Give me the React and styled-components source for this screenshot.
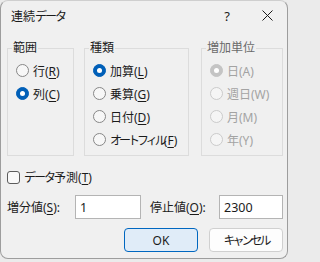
import React from "react";
import styled, { createGlobalStyle } from "styled-components";

const Global = createGlobalStyle`
  html, body {
    margin: 0;
    padding: 0;
    background: #ebebeb;
  }
  body {
    font-family: "Noto Sans", "Noto Sans CJK JP", sans-serif;
    font-size: 12px;
    color: #1b1b1b;
  }
`;

const Dialog = styled.div`
  width: 288px;
  height: 259px;
  box-sizing: border-box;
  background: #f0f0f0;
  border: 1px solid #9d9d9d;
  border-top-color: #cfcfcf;
  border-radius: 8px;
  display: flex;
  flex-direction: column;
  overflow: hidden;
`;

const TitleBar = styled.div`
  height: 29px;
  display: flex;
  align-items: center;
  padding-left: 10px;
`;

const Title = styled.div`
  flex: 1;
  font-size: 12px;
`;

const CapButton = styled.div`
  width: 40px;
  height: 29px;
  display: flex;
  align-items: center;
  justify-content: center;
  font-size: 13px;
  color: #1b1b1b;
`;

const Body = styled.div`
  padding: 10px 4px 0 6px;
  width: 276px;
  display: flex;
  flex-direction: column;
`;

const Groups = styled.div`
  display: flex;
`;

const Group = styled.fieldset`
  width: ${(p) => p.$w}px;
  height: 116px;
  box-sizing: border-box;
  margin: 0 0 0 ${(p) => p.$ml || 0}px;
  padding: 3px 8px 0 8px;
  border: 1px solid #dcdcdc;
  min-width: 0;
`;

const Legend = styled.legend`
  padding: 0 1px;
  margin-left: -4px;
  line-height: 16px;
  color: ${(p) => (p.$disabled ? "#6a6a6a" : "#1b1b1b")};
`;

const Row = styled.label`
  height: 23px;
  display: flex;
  align-items: center;
  gap: 4px;
  white-space: nowrap;
  color: ${(p) => (p.$disabled ? "#a3a3a3" : "#1b1b1b")};
`;

const Radio = styled.span`
  width: 13px;
  height: 13px;
  box-sizing: border-box;
  border-radius: 50%;
  flex: none;
  display: flex;
  align-items: center;
  justify-content: center;
  border: 1px solid
    ${(p) => (p.$checked ? (p.$disabled ? "#c4c4c4" : "#005fb8") : p.$disabled ? "#cbcbcb" : "#878787")};
  background: ${(p) => (p.$checked ? (p.$disabled ? "#c4c4c4" : "#005fb8") : p.$disabled ? "#f5f5f5" : "#f7f7f7")};

  &::after {
    content: "";
    display: ${(p) => (p.$checked ? "block" : "none")};
    width: 5px;
    height: 5px;
    border-radius: 50%;
    background: #fff;
  }
`;

// katakana in the original UI font is proportional, much narrower than full width
const Kana = styled.span`
  display: inline-block;
  letter-spacing: ${(p) => p.$ls}px;
`;

const Key = styled.span`
  text-decoration: underline;
  text-underline-offset: 2px;
`;

const CheckRow = styled.label`
  margin-top: 11px;
  height: 20px;
  display: flex;
  align-items: center;
  gap: 4px;
`;

const Box = styled.span`
  width: 13px;
  height: 13px;
  box-sizing: border-box;
  border: 1px solid #5c5c5c;
  border-radius: 3px;
  background: #f9f9f9;
  flex: none;
`;

const Fields = styled.div`
  margin-top: 8px;
  display: flex;
  align-items: center;
`;

const FieldLabel = styled.span`
  width: ${(p) => p.$w}px;
  margin-left: ${(p) => p.$ml || 0}px;
  white-space: nowrap;
`;

const Input = styled.div`
  width: ${(p) => p.$w}px;
  height: 24px;
  box-sizing: border-box;
  border: 1px solid #b4b4b4;
  background: #fff;
  padding: 0 4px;
  display: flex;
  align-items: center;
  font-size: 12.5px;
`;

const Buttons = styled.div`
  margin-top: 9px;
  display: flex;
  justify-content: flex-end;
  gap: 11px;
`;

const Button = styled.div`
  width: 74px;
  height: 24px;
  box-sizing: border-box;
  border-radius: 4px;
  display: flex;
  align-items: center;
  justify-content: center;
  border: 1px solid ${(p) => (p.$primary ? "#0067c0" : "#d0d0d0")};
  background: ${(p) => (p.$primary ? "#e0ecf8" : "#fdfdfd")};
`;

const Opt = ({ checked, disabled, children }) => (
  <Row $disabled={disabled}>
    <Radio $checked={checked} $disabled={disabled} />
    <span>{children}</span>
  </Row>
);

export default function App() {
  return (
    <>
      <Global />
      <Dialog>
        <TitleBar>
          <Title>
            連続<Kana $ls={-2}>データ</Kana>
          </Title>
          <CapButton>?</CapButton>
          <CapButton>
            <svg width="11" height="11" viewBox="0 0 11 11">
              <path d="M0.5 0.5 L10.5 10.5 M10.5 0.5 L0.5 10.5" stroke="#1b1b1b" strokeWidth="1" />
            </svg>
          </CapButton>
        </TitleBar>
        <Body>
          <Groups>
            <Group $w={67}>
              <Legend>範囲</Legend>
              <Opt>行(<Key>R</Key>)</Opt>
              <Opt checked>列(<Key>C</Key>)</Opt>
            </Group>
            <Group $w={105} $ml={10}>
              <Legend>種類</Legend>
              <Opt checked>加算(<Key>L</Key>)</Opt>
              <Opt>乗算(<Key>G</Key>)</Opt>
              <Opt>日付(<Key>D</Key>)</Opt>
              <Opt>
                <Kana $ls={-3}>オートフィル</Kana>(<Key>F</Key>)
              </Opt>
            </Group>
            <Group $w={82} $ml={12}>
              <Legend $disabled>増加単位</Legend>
              <Opt checked disabled>日(A)</Opt>
              <Opt disabled>週日(W)</Opt>
              <Opt disabled>月(M)</Opt>
              <Opt disabled>年(Y)</Opt>
            </Group>
          </Groups>
          <CheckRow>
            <Box />
            <span>
              <Kana $ls={-2}>データ</Kana>予測(<Key>T</Key>)
            </span>
          </CheckRow>
          <Fields>
            <FieldLabel $w={68}>増分値(<Key>S</Key>):</FieldLabel>
            <Input $w={66}>1</Input>
            <FieldLabel $w={69} $ml={9}>停止値(<Key>O</Key>):</FieldLabel>
            <Input $w={64}>2300</Input>
          </Fields>
          <Buttons>
            <Button $primary>OK</Button>
            <Button>
              <Kana $ls={-3}>キャンセル</Kana>
            </Button>
          </Buttons>
        </Body>
      </Dialog>
    </>
  );
}
